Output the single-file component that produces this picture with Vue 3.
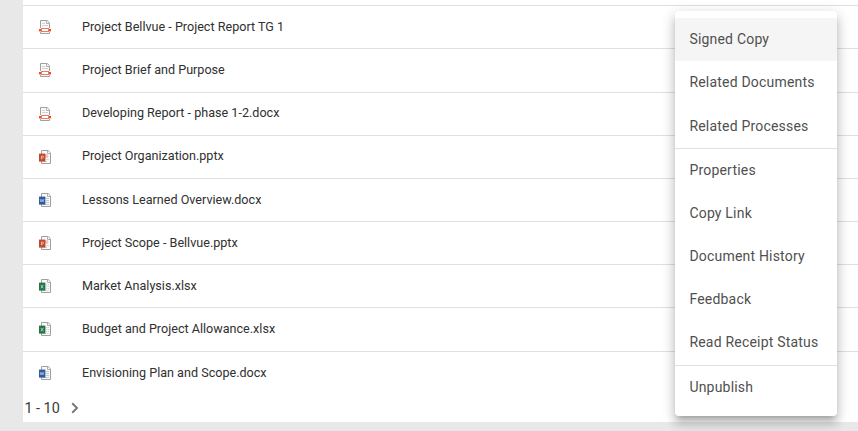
<script setup>
const files = [
  { name: 'Project Bellvue - Project Report TG 1', type: 'signed' },
  { name: 'Project Brief and Purpose', type: 'signed', tall: true },
  { name: 'Developing Report - phase 1-2.docx', type: 'signed', raised: true },
  { name: 'Project Organization.pptx', type: 'pptx', raised: true },
  { name: 'Lessons Learned Overview.docx', type: 'docx' },
  { name: 'Project Scope - Bellvue.pptx', type: 'pptx' },
  { name: 'Market Analysis.xlsx', type: 'xlsx' },
  { name: 'Budget and Project Allowance.xlsx', type: 'xlsx', tall: true },
  { name: 'Envisioning Plan and Scope.docx', type: 'docx' },
]
const badge = { pptx: '#c0482e', docx: '#2f5a9e', xlsx: '#237548' }
const menu = [
  ['Signed Copy', 'Related Documents', 'Related Processes'],
  ['Properties', 'Copy Link', 'Document History', 'Feedback', 'Read Receipt Status'],
  ['Unpublish'],
]
</script>

<template>
  <div class="page">
    <main class="panel">
      <ul class="files">
        <li v-for="f in files" :key="f.name" class="row" :class="{ tall: f.tall, raised: f.raised }">
          <svg class="icon" viewBox="0 0 12 14" width="12" height="14">
            <template v-if="f.type === 'signed'">
              <path d="M1.5 13.5V.5h6.7l2.3 2.3v10.7z" fill="#fafafa" stroke="#a0a0a0" />
              <path d="M7.5 .5v3h3" fill="none" stroke="#b0b0b0" />
              <path d="M3 3.5h3M3 5.5h6" stroke="#d2d2d2" />
              <rect x="0" y="8" width="12" height="4" fill="#fff" />
              <rect x="0" y="9" width="2.4" height="2.4" fill="#e2502c" />
              <rect x="9.6" y="9" width="2.4" height="2.4" fill="#e2502c" />
              <rect x="2.5" y="8.5" width="7" height="3" fill="#fff" stroke="#ea7a60" />
            </template>
            <template v-else>
              <path d="M2.5 .5h6.7l2.3 2.3v10.7h-9z" fill="#fafafa" stroke="#a0a0a0" />
              <path d="M8.5 .5v3h3" fill="none" stroke="#b0b0b0" />
              <path v-if="f.type === 'docx'" d="M7 5.5h3M7 7.5h3M7 9.5h3M4 11.5h6" stroke="#c3c8d0" />
              <path v-else-if="f.type === 'xlsx'" d="M7 5.5h3M7 7.5h3M7 9.5h3M4 11.5h6" stroke="#d0d4d1" stroke-dasharray="1.2 .6" />
              <template v-else>
                <circle cx="7.5" cy="6" r="2" fill="#f0c5b8" />
                <path d="M7 9.5h3M5 11.5h3" stroke="#ddd5d2" />
              </template>
              <rect x="0" y="3.6" width="6.4" height="8" :fill="badge[f.type]" />
              <path v-if="f.type === 'docx'" d="M1.2 6l.8 3 1-2.6L4 9l.8-3" fill="none" stroke="#c0cde6" stroke-width=".7" />
              <path v-else-if="f.type === 'xlsx'" d="M1.9 5.9l2.4 3.4M4.3 5.9L1.9 9.3" stroke="#c3dfcf" stroke-width=".8" />
              <path v-else d="M2.4 9.3V6h1.2q1 .1 1 1t-1 1H2.4" fill="none" stroke="#f3cdc2" stroke-width=".8" />
            </template>
          </svg>
          <span class="name">{{ f.name }}</span>
        </li>
      </ul>
      <footer class="pager">
        <span>1 - 10</span>
        <svg width="8" height="12" viewBox="0 0 8 12"><path d="M1.2 1.3L6 6 1.2 10.7" fill="none" stroke="#757575" stroke-width="1.9" /></svg>
      </footer>
    </main>
    <div class="menu" role="menu">
      <div v-for="(group, g) in menu" :key="g" class="group">
        <div v-for="(item, i) in group" :key="item" class="item" :class="{ active: g === 0 && i === 0 }" role="menuitem">{{ item }}</div>
      </div>
    </div>
  </div>
</template>

<style>
body {
  margin: 0;
  overflow: hidden;
}
</style>

<style scoped>
.page {
  position: relative;
  box-sizing: border-box;
  width: 858px;
  height: 431px;
  padding-left: 23px;
  background: #e8e8e8;
  font-family: Roboto, sans-serif;
  overflow: hidden;
}
.panel {
  box-sizing: border-box;
  height: 422px;
  padding-top: 5px;
  background: #fff;
}
.files {
  margin: 0;
  padding: 0;
  list-style: none;
}
.row {
  display: flex;
  align-items: flex-start;
  box-sizing: border-box;
  height: 43px;
  padding-left: 16px;
  border-top: 1px solid #e0e0e0;
}
.row.tall {
  height: 44px;
}
.icon {
  flex: none;
  margin: 14px 31px 0 0;
}
.name {
  margin-top: 12px;
  font-size: 12.6px;
  line-height: 18px;
  color: #303030;
  white-space: nowrap;
}
.raised .name {
  margin-top: 11px;
}
.pager {
  display: flex;
  align-items: center;
  gap: 11px;
  height: 18px;
  margin-top: 5px;
  padding-left: 1.4px;
  font-size: 14.4px;
  color: #3a3a3a;
}
.menu {
  position: absolute;
  left: 675px;
  top: 11px;
  box-sizing: border-box;
  width: 162px;
  height: 405px;
  padding-top: 7px;
  border-radius: 4px;
  background: #fff;
  box-shadow: 0 5px 5px -3px rgba(0, 0, 0, 0.2), 0 8px 10px 1px rgba(0, 0, 0, 0.14), 0 3px 14px 2px rgba(0, 0, 0, 0.12);
}
.group + .group {
  border-top: 1px solid #e0e0e0;
}
.item {
  height: 43.2px;
  padding-left: 14.4px;
  font-size: 14px;
  line-height: 43.2px;
  letter-spacing: 0.2px;
  color: #505050;
  white-space: nowrap;
}
.item.active {
  background: #f5f5f5;
}
.group:first-child .item:last-child {
  line-height: 44.6px;
}
</style>
